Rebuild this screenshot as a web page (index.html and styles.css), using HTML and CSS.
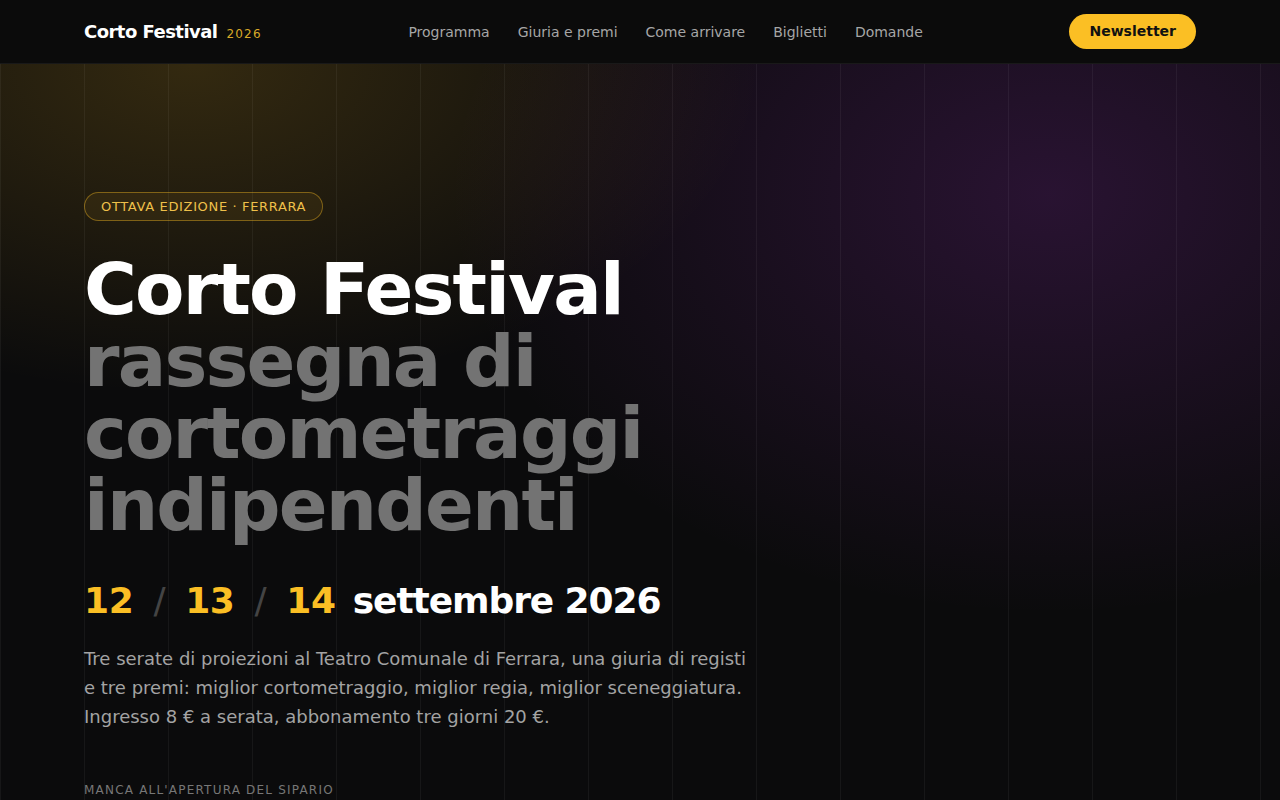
FILE: index.html
```html
<!DOCTYPE html>
<html lang="it">
<head>
    <meta charset="UTF-8">
    <meta name="viewport" content="width=device-width, initial-scale=1.0">
    <title>Corto Festival 2026</title>
    <link rel="stylesheet" href="styles.css">
</head>
<body>

<header class="site-header">
    <div class="wrap header-row">
        <a class="brand" href="#">
            <span class="brand-name">Corto Festival</span>
            <span class="brand-year">2026</span>
        </a>

        <!-- Main navigation -->
        <nav class="main-nav">
            <a href="#programma">Programma</a>
            <a href="#giuria">Giuria e premi</a>
            <a href="#arrivare">Come arrivare</a>
            <a href="#biglietti">Biglietti</a>
            <a href="#domande">Domande</a>
        </nav>

        <a class="btn-newsletter" href="#newsletter">Newsletter</a>
    </div>
</header>

<section class="hero">
    <div class="wrap">
        <span class="badge">Ottava edizione · Ferrara</span>

        <h1 class="hero-title">
            <span class="title-main">Corto Festival</span>
            <span class="title-sub">rassegna di cortometraggi indipendenti</span>
        </h1>

        <!-- Festival dates -->
        <div class="dates">
            <span class="day">12</span>
            <span class="sep">/</span>
            <span class="day">13</span>
            <span class="sep">/</span>
            <span class="day">14</span>
            <span class="month">settembre 2026</span>
        </div>

        <p class="intro">Tre serate di proiezioni al Teatro Comunale di Ferrara, una giuria di registi e tre premi: miglior cortometraggio, miglior regia, miglior sceneggiatura. Ingresso 8&nbsp;€ a serata, abbonamento tre giorni 20&nbsp;€.</p>

        <p class="countdown-label">Manca all'apertura del sipario</p>
    </div>
</section>

</body>
</html>
```

FILE: styles.css
```css
* {
    box-sizing: border-box;
}
body {
    margin: 0;
    font-family: "DejaVu Sans", "Noto Sans", sans-serif;
    background-color: #0b0b0c;
    color: #fff;
}
a {
    text-decoration: none;
    color: inherit;
}
.wrap {
    max-width: 1112px;
    margin: 0 auto;
}

/* Header */
.site-header {
    background-color: #0b0b0b;
    border-bottom: 1px solid rgba(255, 255, 255, 0.06);
}
.header-row {
    height: 63px;
    display: flex;
    align-items: center;
    justify-content: space-between;
}
.brand {
    display: flex;
    align-items: baseline;
    gap: 9px;
}
.brand-name {
    font-size: 18px;
    font-weight: bold;
    letter-spacing: -0.03em;
    color: #fff;
}
.brand-year {
    font-size: 12px;
    letter-spacing: 0.1em;
    color: #d9a928;
}
.main-nav {
    display: flex;
    gap: 28px;
}
.main-nav a {
    font-size: 14px;
    color: #a6a6a6;
}
.btn-newsletter {
    background-color: #fbbf24;
    color: #111;
    font-size: 14px;
    font-weight: bold;
    line-height: 17px;
    padding: 9px 20px;
    border-radius: 999px;
}

/* Hero */
.hero {
    min-height: 736px;
    padding: 128px 0 80px;
    background-image:
        linear-gradient(90deg, rgba(255, 255, 255, 0.05) 1px, transparent 1px),
        radial-gradient(ellipse 760px 440px at 15% 0%, rgba(251, 191, 36, 0.17), transparent 75%),
        radial-gradient(ellipse 800px 560px at 82% 16%, rgba(160, 50, 200, 0.2), transparent 75%);
    background-size: 84px 100%, auto, auto;
    background-color: #0b0b0c;
}
.badge {
    display: inline-block;
    font-size: 13px;
    line-height: 15px;
    letter-spacing: 0.05em;
    text-transform: uppercase;
    color: #efc04a;
    padding: 6px 16px;
    border: 1px solid rgba(251, 191, 36, 0.4);
    background-color: rgba(251, 191, 36, 0.07);
    border-radius: 999px;
}
.hero-title {
    margin: 32px 0 0;
    font-size: 72px;
    line-height: 1;
    letter-spacing: -0.025em;
    font-weight: bold;
    max-width: 600px;
}
.title-main {
    display: block;
    color: #fff;
}
.title-sub {
    display: block;
    color: #737373;
}
.dates {
    margin-top: 38px;
    display: flex;
    align-items: baseline;
    gap: 20px;
    font-size: 36px;
    line-height: 1.2;
    font-weight: bold;
    letter-spacing: -0.01em;
}
.day {
    color: #fbbf24;
}
.sep {
    color: #444;
    font-weight: normal;
}
.month {
    color: #fff;
    margin-left: -3px;
    letter-spacing: -0.03em;
}
.intro {
    margin: 23px 0 0;
    max-width: 668px;
    font-size: 18px;
    line-height: 1.6;
    color: #a3a3a3;
}
.countdown-label {
    margin: 51px 0 0;
    font-size: 12px;
    letter-spacing: 0.1em;
    text-transform: uppercase;
    color: #777;
}
```
